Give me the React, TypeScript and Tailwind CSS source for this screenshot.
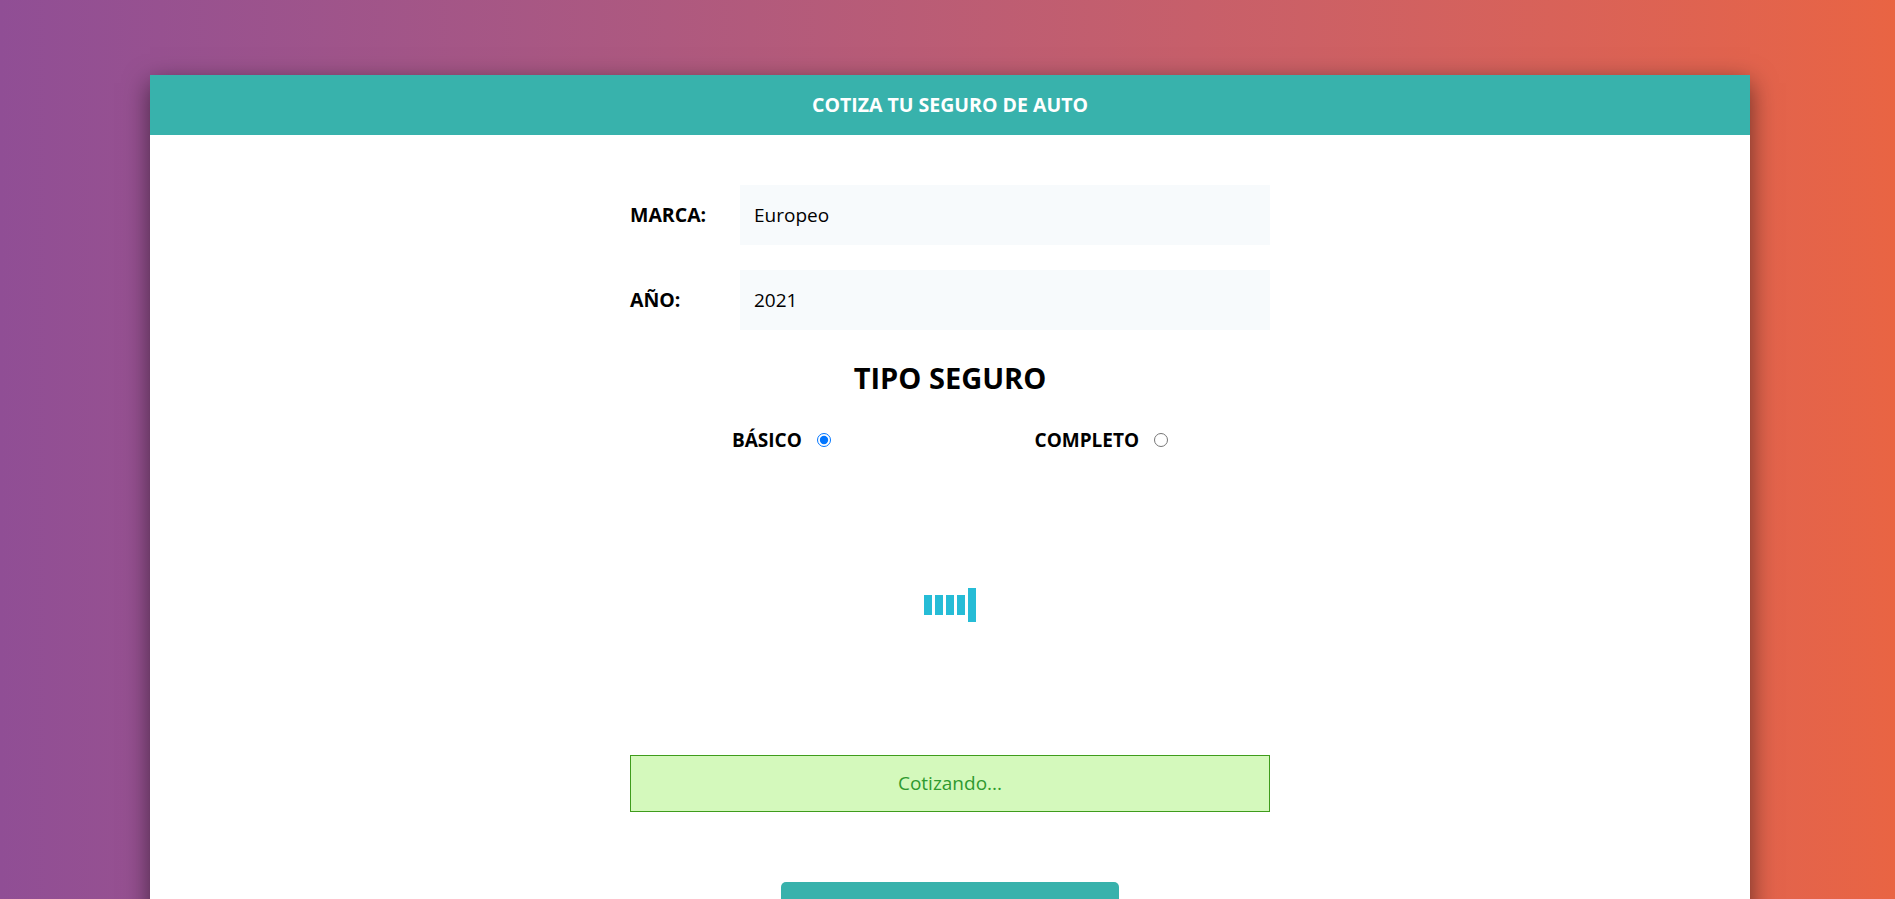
import React from "react";

const font = { fontFamily: '"Open Sans", "Noto Sans", sans-serif' };

function Spinner() {
  return (
    <div className="flex h-[34px] items-center justify-center gap-[3px]">
      <span className="h-[20px] w-[8px] bg-[#26bcd6]" />
      <span className="h-[20px] w-[8px] bg-[#26bcd6]" />
      <span className="h-[20px] w-[8px] bg-[#26bcd6]" />
      <span className="h-[20px] w-[8px] bg-[#26bcd6]" />
      <span className="h-[34px] w-[8px] bg-[#26bcd6]" />
    </div>
  );
}

export default function App() {
  return (
    <div
      style={font}
      className="min-h-[899px] overflow-hidden bg-linear-to-r from-[#904e95] to-[#e96443] pt-[75px] pl-[5px]"
    >
      <div className="mx-auto min-h-[900px] w-[1600px] bg-white shadow-[0_8px_24px_rgba(0,0,0,0.55)]">
        <header className="flex h-[60px] items-center justify-center bg-[#38b2ac] text-[19.5px] font-bold text-white">
          COTIZA TU SEGURO DE AUTO
        </header>

        <form className="mx-auto w-[640px] pt-[50px]">
          <div className="flex flex-col gap-[25px]">
            <div className="flex h-[60px] items-center">
              <label className="w-[110px] text-[19.5px] font-bold text-black">MARCA:</label>
              <div className="flex h-full flex-1 items-center bg-[#f7fafc] px-[14px] text-[19px] text-black">
                Europeo
              </div>
            </div>
            <div className="flex h-[60px] items-center">
              <label className="w-[110px] text-[19.5px] font-bold text-black">AÑO:</label>
              <div className="flex h-full flex-1 items-center bg-[#f7fafc] px-[14px] text-[19px] text-black">
                2021
              </div>
            </div>
          </div>

          <h2 className="mt-[30px] text-center text-[29px] leading-[36px] font-bold text-black">TIPO SEGURO</h2>

          <div className="mt-[32px] flex h-[24px] items-center justify-around">
            <label className="flex items-center gap-[15px] text-[19px] font-bold text-black">
              BÁSICO
              <input type="radio" name="plan" defaultChecked className="m-0 h-[14px] w-[14px]" />
            </label>
            <label className="flex items-center gap-[15px] text-[19px] font-bold text-black">
              COMPLETO
              <input type="radio" name="plan" className="m-0 h-[14px] w-[14px]" />
            </label>
          </div>

          <div className="mt-[136px]">
            <Spinner />
          </div>

          <div className="mt-[133px] flex h-[57px] items-center justify-center border border-[#3f9c1c] bg-[#d4f9bc] text-[19px] text-[#2f9a2f]">
            Cotizando...
          </div>

          <div className="mt-[70px] flex justify-center">
            <button type="button" className="h-[50px] w-[338px] rounded-[5px] bg-[#38b2ac] text-[19px] font-bold text-white">
              COTIZAR
            </button>
          </div>
        </form>
      </div>
    </div>
  );
}
